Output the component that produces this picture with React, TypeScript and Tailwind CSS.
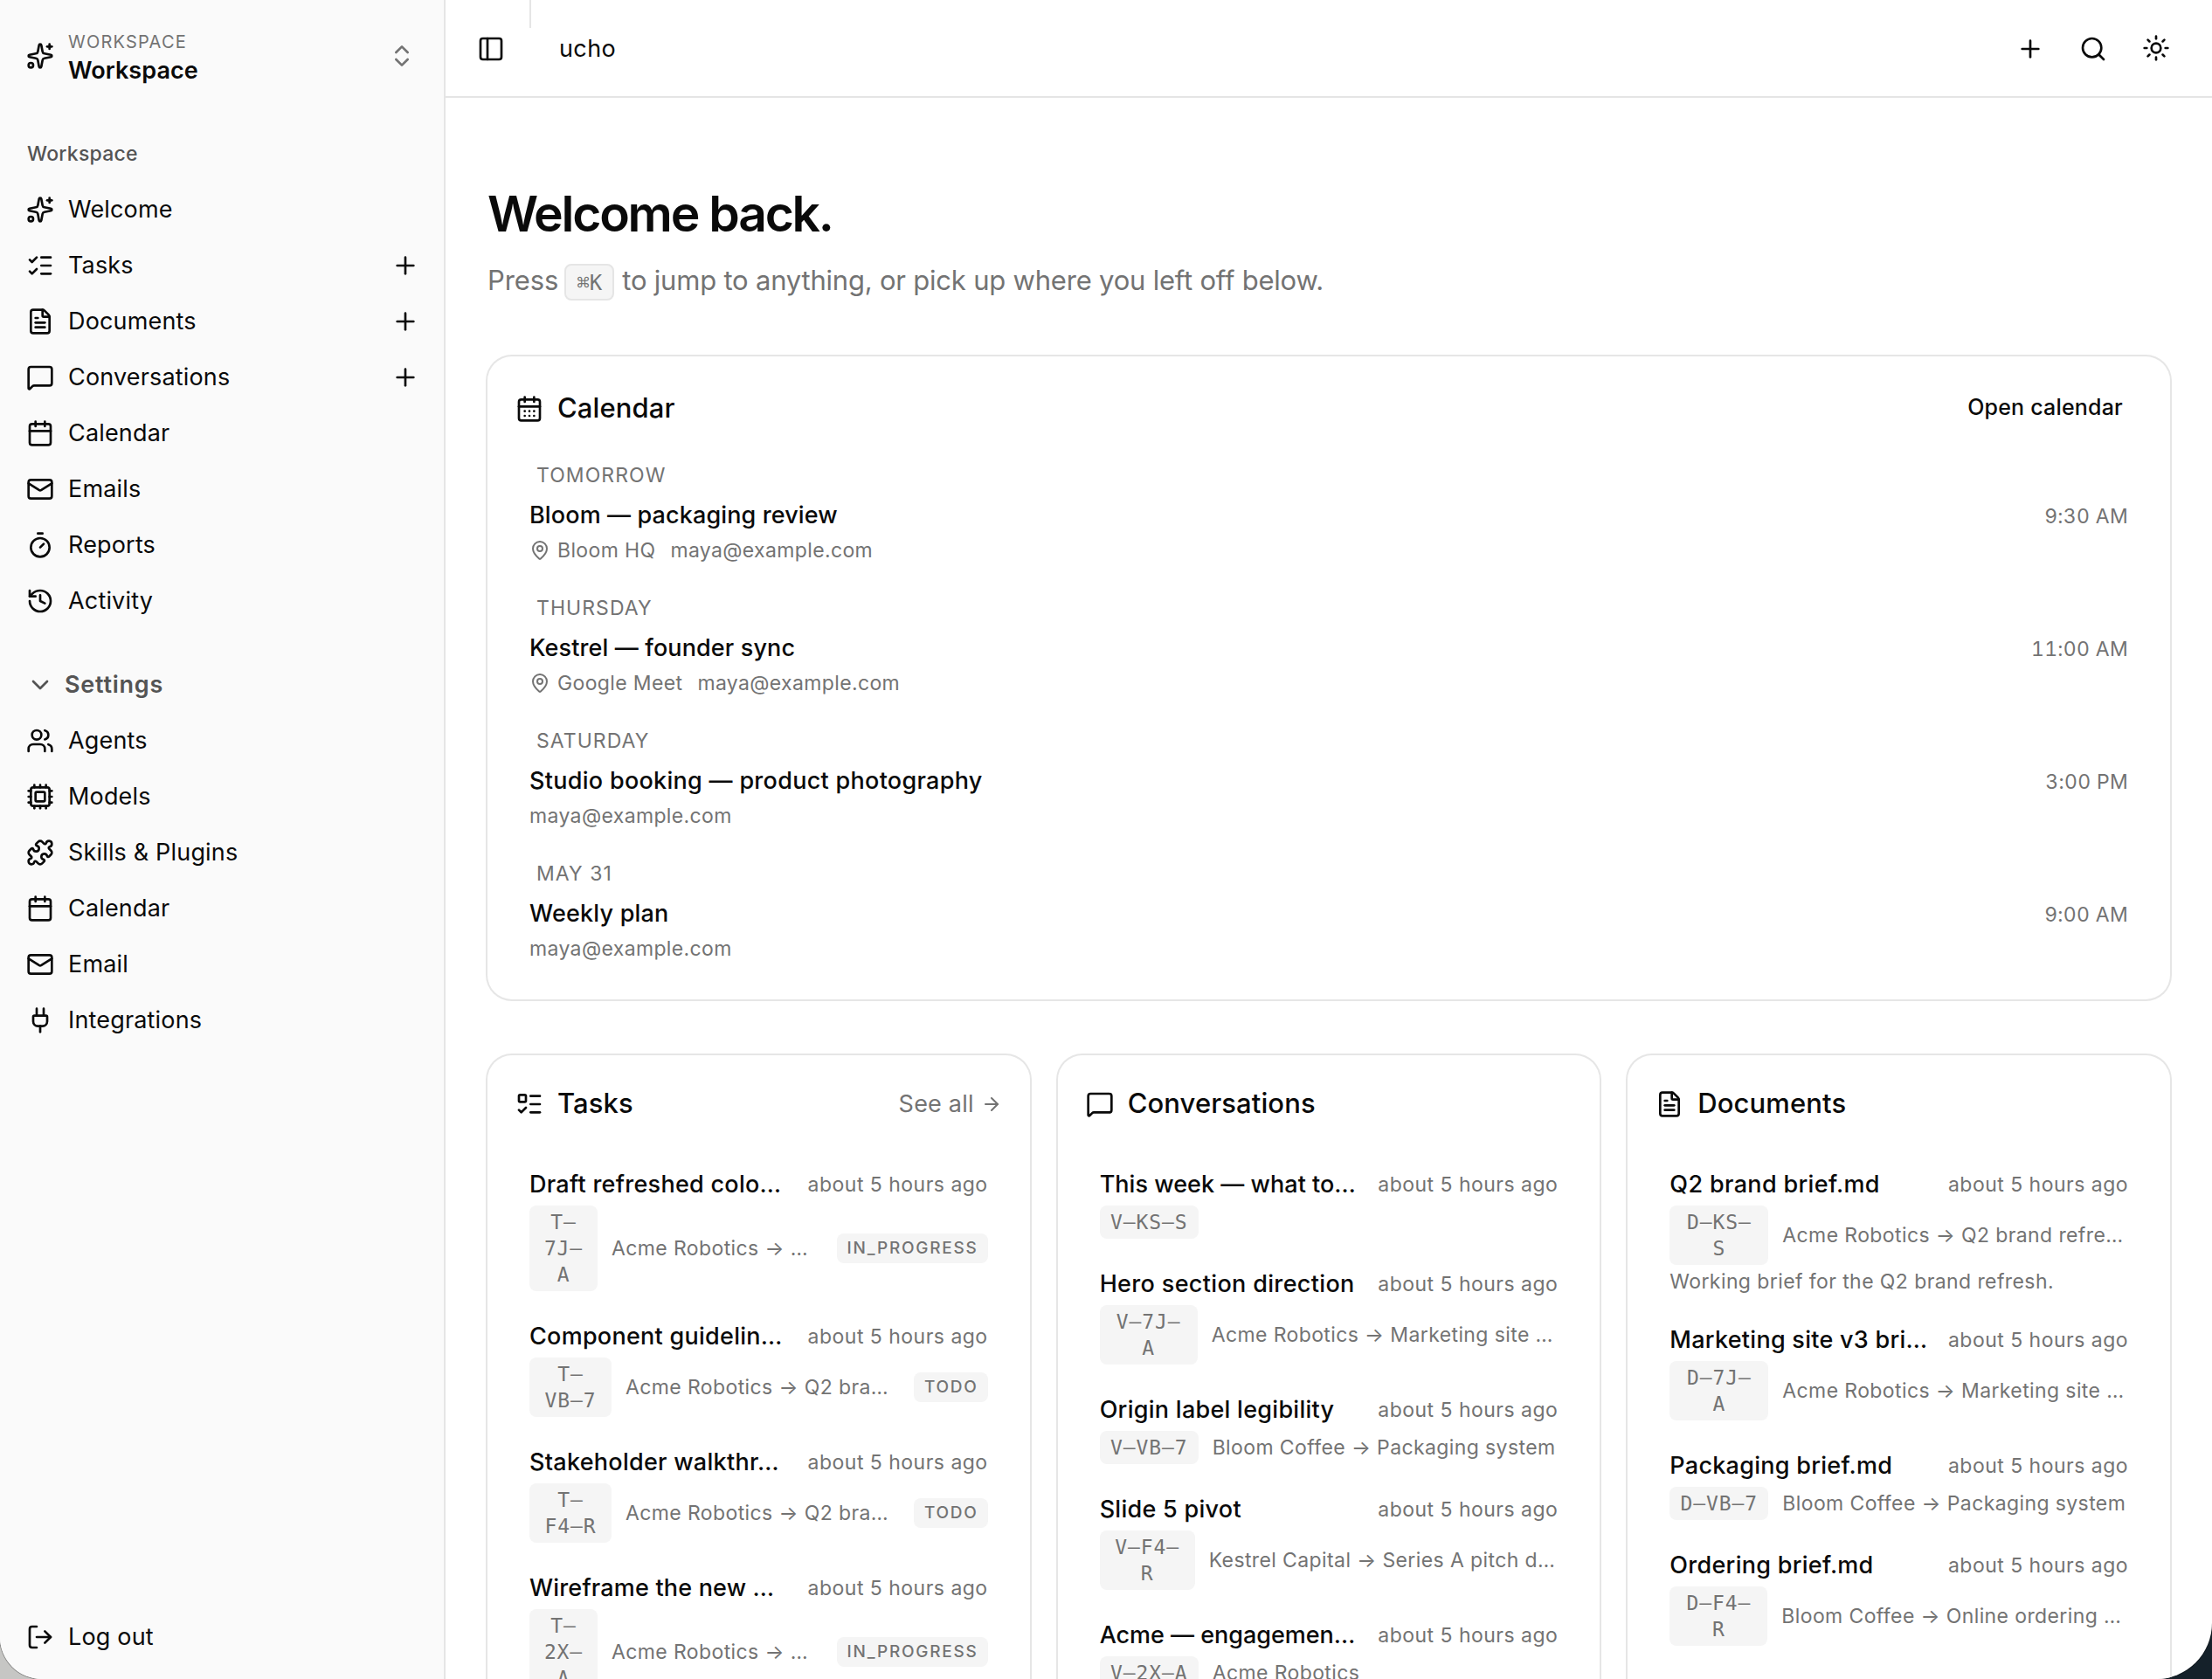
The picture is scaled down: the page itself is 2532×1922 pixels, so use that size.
import type { ReactNode } from "react";
import {
  ArrowRight,
  Calendar,
  CalendarDays,
  ChevronDown,
  ChevronsUpDown,
  Cpu,
  FileText,
  History,
  ListChecks,
  ListTodo,
  LogOut,
  Mail,
  MapPin,
  MessageSquare,
  PanelLeft,
  Plug,
  Plus,
  Puzzle,
  Search,
  Sparkles,
  Sun,
  Timer,
  Users,
  type LucideIcon,
} from "lucide-react";

type NavEntry = { icon: LucideIcon; label: string; add?: boolean };

const workspaceNav: NavEntry[] = [
  { icon: Sparkles, label: "Welcome" },
  { icon: ListChecks, label: "Tasks", add: true },
  { icon: FileText, label: "Documents", add: true },
  { icon: MessageSquare, label: "Conversations", add: true },
  { icon: Calendar, label: "Calendar" },
  { icon: Mail, label: "Emails" },
  { icon: Timer, label: "Reports" },
  { icon: History, label: "Activity" },
];

const settingsNav: NavEntry[] = [
  { icon: Users, label: "Agents" },
  { icon: Cpu, label: "Models" },
  { icon: Puzzle, label: "Skills & Plugins" },
  { icon: Calendar, label: "Calendar" },
  { icon: Mail, label: "Email" },
  { icon: Plug, label: "Integrations" },
];

const events = [
  { day: "TOMORROW", title: "Bloom — packaging review", place: "Bloom HQ", time: "9:30 AM", tracking: "tracking-[0.12px]" },
  { day: "THURSDAY", title: "Kestrel — founder sync", place: "Google Meet", time: "11:00 AM", tracking: "tracking-[0.12px]" },
  { day: "SATURDAY", title: "Studio booking — product photography", time: "3:00 PM", tracking: "tracking-[0.29px]" },
  { day: "MAY 31", title: "Weekly plan", time: "9:00 AM", tracking: "tracking-[0.2px]" },
];

type Item = {
  title: string;
  tracking?: string;
  code: string[];
  chip: string;
  path?: string;
  status?: string;
  note?: string;
};

const tasks: Item[] = [
  { title: "Draft refreshed colo…", code: ["T–", "7J–", "A"], chip: "w-[78px]", path: "Acme Robotics → …", status: "IN_PROGRESS" },
  { title: "Component guidelin…", code: ["T–", "VB–7"], chip: "w-[94px]", path: "Acme Robotics → Q2 bra…", status: "TODO" },
  { title: "Stakeholder walkthr…", code: ["T–", "F4–R"], chip: "w-[94px]", path: "Acme Robotics → Q2 bra…", status: "TODO" },
  { title: "Wireframe the new …", tracking: "tracking-[0.18px]", code: ["T–", "2X–", "A"], chip: "w-[78px]", path: "Acme Robotics → …", status: "IN_PROGRESS" },
];

const conversations: Item[] = [
  { title: "This week — what to…", tracking: "tracking-[0.03px]", code: ["V–KS–S"], chip: "w-[113px]" },
  { title: "Hero section direction", tracking: "tracking-[0.34px]", code: ["V–7J–", "A"], chip: "w-[112px]", path: "Acme Robotics → Marketing site …" },
  { title: "Origin label legibility", code: ["V–VB–7"], chip: "w-[113px]", path: "Bloom Coffee → Packaging system" },
  { title: "Slide 5 pivot", code: ["V–F4–", "R"], chip: "w-[109px]", path: "Kestrel Capital → Series A pitch d…" },
  { title: "Acme — engagemen…", tracking: "tracking-[-0.03px]", code: ["V–2X–A"], chip: "w-[113px]", path: "Acme Robotics" },
];

const documents: Item[] = [
  { title: "Q2 brand brief.md", tracking: "tracking-[0.34px]", code: ["D–KS–", "S"], chip: "w-[113px]", path: "Acme Robotics → Q2 brand refre…", note: "Working brief for the Q2 brand refresh." },
  { title: "Marketing site v3 bri…", code: ["D–7J–", "A"], chip: "w-[113px]", path: "Acme Robotics → Marketing site …" },
  { title: "Packaging brief.md", code: ["D–VB–7"], chip: "w-[113px]", path: "Bloom Coffee → Packaging system" },
  { title: "Ordering brief.md", code: ["D–F4–", "R"], chip: "w-[112px]", path: "Bloom Coffee → Online ordering …" },
];

function NavRow({ icon: Icon, label, add }: NavEntry) {
  return (
    <a className="flex h-16 items-center gap-4 pl-[30px] pr-7">
      <Icon className="size-8 shrink-0" />
      <span className="flex-1 pt-px text-[27px] tracking-[0.17px]">{label}</span>
      {add && <Plus className="size-8" />}
    </a>
  );
}

function Sidebar() {
  return (
    <aside className="flex w-[510px] shrink-0 flex-col border-r-2 border-[#e5e5e5] bg-[#fafafa]">
      <div className="flex h-32 items-center gap-4 pl-[30px] pr-8">
        <Sparkles className="size-8 shrink-0" />
        <div className="flex flex-1 flex-col pt-[3px]">
          <span className="text-[20px] leading-[30px] tracking-[1.23px] text-[#737373]">WORKSPACE</span>
          <span className="text-[27px] font-semibold leading-[36px] tracking-[0.05px]">Workspace</span>
        </div>
        <ChevronsUpDown className="size-8 text-[#737373]" />
      </div>
      <div className="mt-4 flex h-16 items-center pl-[31px] pt-px text-[23px] font-medium tracking-[0.24px] text-[#545454]">
        Workspace
      </div>
      <nav className="flex flex-col">
        {workspaceNav.map((n) => (
          <NavRow key={n.label} {...n} />
        ))}
      </nav>
      <div className="mt-8 flex h-16 items-center gap-3 pl-[30px] text-[#545454]">
        <ChevronDown className="size-8" />
        <span className="text-[27px] font-semibold tracking-[0.74px]">Settings</span>
      </div>
      <nav className="flex flex-col">
        {settingsNav.map((n) => (
          <NavRow key={n.label} {...n} />
        ))}
      </nav>
      <div className="mb-4 mt-auto">
        <NavRow icon={LogOut} label="Log out" />
      </div>
    </aside>
  );
}

function TopBar() {
  return (
    <header className="flex h-28 shrink-0 border-b-2 border-[#e5e5e5] pl-9 pr-12">
      <PanelLeft className="mt-10 size-8" />
      <div className="ml-7 h-8 w-0.5 bg-[#e5e5e5]" />
      <span className="ml-8 flex h-28 items-center text-[27px] tracking-[0.4px]">ucho</span>
      <div className="ml-auto mt-10 flex gap-10">
        <Plus className="size-8" />
        <Search className="size-8" />
        <Sun className="-mt-px size-8" />
      </div>
    </header>
  );
}

function Card({ className, children }: { className?: string; children: ReactNode }) {
  return (
    <section className={`rounded-[28px] bg-white px-8 shadow-[0_0_0_2px_#e6e6e6] ${className ?? ""}`}>
      {children}
    </section>
  );
}

function CardTitle({ icon: Icon, children }: { icon: LucideIcon; children: ReactNode }) {
  return (
    <div className="flex items-center gap-4">
      <Icon className="size-8" />
      <h2 className="-mt-0.5 text-[31px] font-medium tracking-[0.1px]">{children}</h2>
    </div>
  );
}

function CalendarCard() {
  return (
    <Card className="mt-16 h-[736px] pt-7">
      <div className="flex h-16 items-center justify-between pr-[22px]">
        <CardTitle icon={CalendarDays}>Calendar</CardTitle>
        <button className="-mt-0.5 text-[25px] font-medium tracking-[0.2px]">Open calendar</button>
      </div>
      <div className="mt-7 flex flex-col gap-[34px] px-4">
        {events.map((e) => (
          <div key={e.day}>
            <div className="pl-2 text-[23px] leading-8 tracking-[1.06px] text-[#737373]">{e.day}</div>
            <div className="mt-2.5 flex items-baseline justify-between">
              <span className={`text-[27px] font-medium leading-10 ${e.tracking}`}>{e.title}</span>
              <span className="text-[23px] leading-8 tracking-[0.3px] tabular-nums text-[#737373]">{e.time}</span>
            </div>
            <div className="mt-1 flex h-8 items-center text-[23px] tracking-[0.36px] text-[#737373]">
              {e.place && (
                <>
                  <MapPin className="mr-2 size-6" />
                  <span className="mr-[17px]">{e.place}</span>
                </>
              )}
              <span>maya@example.com</span>
            </div>
          </div>
        ))}
      </div>
    </Card>
  );
}

function ItemRow({ item }: { item: Item }) {
  return (
    <div className="px-4 py-4">
      <div className="flex h-10 items-center justify-between whitespace-nowrap">
        <span className={`text-[27px] font-medium ${item.tracking ?? "tracking-[0.27px]"}`}>{item.title}</span>
        <span className="pt-px text-[23px] tracking-[0.48px] text-[#737373]">about 5 hours ago</span>
      </div>
      <div className="mt-1 flex items-center whitespace-nowrap text-[#737373]">
        <div
          className={`flex shrink-0 flex-col items-center rounded-lg bg-[#f5f5f5] py-1 font-['DejaVu_Sans_Mono',monospace] text-[23px] leading-[30px] tracking-[0.9px] ${item.chip}`}
        >
          {item.code.map((c) => (
            <span key={c}>{c}</span>
          ))}
        </div>
        {item.path && <span className="ml-4 text-[23px] tracking-[0.39px]">{item.path}</span>}
        {item.status && (
          <span className="ml-auto flex h-[34px] items-center rounded-lg bg-[#f5f5f5] pl-3 pr-[11px] text-[19px] font-medium tracking-[1.76px]">
            {item.status}
          </span>
        )}
      </div>
      {item.note && (
        <p className="mt-1 whitespace-nowrap text-[23px] leading-[30px] tracking-[0.41px] text-[#737373]">{item.note}</p>
      )}
    </div>
  );
}

function ListCard({ icon, title, items, link }: { icon: LucideIcon; title: string; items: Item[]; link?: boolean }) {
  return (
    <Card className="h-[800px] pt-6">
      <div className="mb-6 flex h-16 items-center justify-between">
        <CardTitle icon={icon}>{title}</CardTitle>
        {link && (
          <a className="flex items-center gap-2 text-[27px] tracking-[0.2px] text-[#737373]">
            See all <ArrowRight className="size-6" />
          </a>
        )}
      </div>
      {items.map((item) => (
        <ItemRow key={item.title} item={item} />
      ))}
    </Card>
  );
}

export default function App() {
  return (
    <div className="h-[1922px] w-[2532px] overflow-hidden bg-[linear-gradient(90deg,#c6c6c4_50%,#15212a_50%)] font-[Inter,sans-serif] text-[#0a0a0a]">
      <div className="flex h-full overflow-hidden rounded-bl-[48px] rounded-br-[64px] bg-white shadow-[0_0_0_1px_rgba(0,0,0,0.3)]">
        <Sidebar />
        <main className="flex min-w-0 flex-1 flex-col">
          <TopBar />
          <div className="px-12">
            <h1 className="mt-[97px] text-[57px] font-semibold leading-[72px] tracking-[-2.24px]">Welcome back.</h1>
            <div className="mt-[21px] flex h-[42px] items-center text-[31px] text-[#737373]">
              <span className="-mt-1 tracking-[-0.1px]">Press</span>
              <kbd className="ml-[7px] mr-[9px] flex h-[42px] w-[57px] items-center justify-center rounded-lg border-2 border-[#e5e5e5] bg-[#f5f5f5] pt-0.5 font-['DejaVu_Sans_Mono',monospace] text-[24px]">
                ⌘K
              </kbd>
              <span className="-mt-1 tracking-[-0.21px]">to jump to anything, or pick up where you left off below.</span>
            </div>
            <CalendarCard />
            <div className="mt-16 grid grid-cols-3 gap-8">
              <ListCard icon={ListTodo} title="Tasks" items={tasks} link />
              <ListCard icon={MessageSquare} title="Conversations" items={conversations} />
              <ListCard icon={FileText} title="Documents" items={documents} />
            </div>
          </div>
        </main>
      </div>
    </div>
  );
}
